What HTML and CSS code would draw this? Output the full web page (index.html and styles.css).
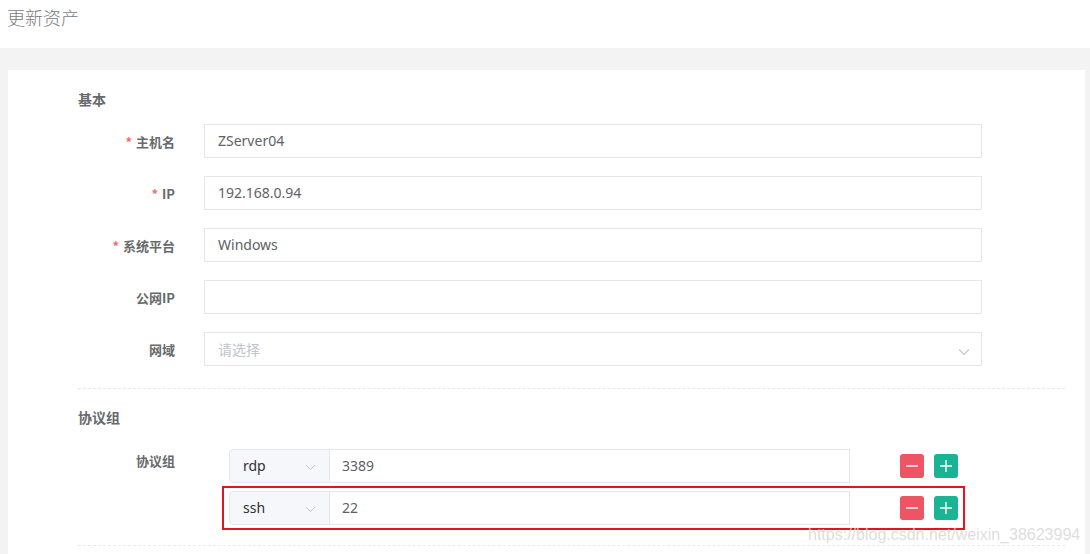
FILE: index.html
```html
<!DOCTYPE html>
<html lang="zh">
<head>
<meta charset="utf-8">
<title>更新资产</title>
<link rel="stylesheet" href="styles.css">
</head>
<body>
<header class="page-head">更新资产</header>
<main class="page-body">
  <section class="card">
    <h3 class="section-title">基本</h3>
    <div class="form-row">
      <label class="form-label"><span class="req">*</span>主机名</label>
      <div class="input">ZServer04</div>
    </div>
    <div class="form-row">
      <label class="form-label"><span class="req">*</span>IP</label>
      <div class="input">192.168.0.94</div>
    </div>
    <div class="form-row">
      <label class="form-label"><span class="req">*</span>系统平台</label>
      <div class="input">Windows</div>
    </div>
    <div class="form-row">
      <label class="form-label">公网IP</label>
      <div class="input"></div>
    </div>
    <div class="form-row">
      <label class="form-label">网域</label>
      <div class="input select">
        <span class="placeholder">请选择</span>
        <svg class="chev" width="12" height="8" viewBox="0 0 12 8"><path d="M1 1.5 L6 6.5 L11 1.5" fill="none" stroke="#c0c4cc" stroke-width="1.1"/></svg>
      </div>
    </div>
    <hr class="divider">
    <h3 class="section-title second">协议组</h3>
    <div class="proto-block">
      <label class="form-label proto-label">协议组</label>
      <div class="proto-list">
        <div class="proto-row">
          <div class="proto-group">
            <div class="proto-select">rdp
              <svg class="chev-sm" width="11" height="7" viewBox="0 0 11 7"><path d="M1 1 L5.5 5.5 L10 1" fill="none" stroke="#c0c4cc" stroke-width="1"/></svg>
            </div>
            <div class="proto-port">3389</div>
          </div>
          <div class="btns">
            <button class="btn minus"><svg width="12" height="12" viewBox="0 0 12 12"><path d="M0 6 H12" stroke="#fff" stroke-width="1.4"/></svg></button>
            <button class="btn plus"><svg width="12" height="12" viewBox="0 0 12 12"><path d="M0 6 H12 M6 0 V12" stroke="#fff" stroke-width="1.4"/></svg></button>
          </div>
        </div>
        <div class="proto-row marked">
          <div class="proto-group">
            <div class="proto-select">ssh
              <svg class="chev-sm" width="11" height="7" viewBox="0 0 11 7"><path d="M1 1 L5.5 5.5 L10 1" fill="none" stroke="#c0c4cc" stroke-width="1"/></svg>
            </div>
            <div class="proto-port">22</div>
          </div>
          <div class="btns">
            <button class="btn minus"><svg width="12" height="12" viewBox="0 0 12 12"><path d="M0 6 H12" stroke="#fff" stroke-width="1.4"/></svg></button>
            <button class="btn plus"><svg width="12" height="12" viewBox="0 0 12 12"><path d="M0 6 H12 M6 0 V12" stroke="#fff" stroke-width="1.4"/></svg></button>
          </div>
        </div>
      </div>
    </div>
    <hr class="divider last">
  </section>
</main>
<div class="watermark">https://blog.csdn.net/weixin_38623994</div>
</body>
</html>
```

FILE: styles.css
```css
* { box-sizing: border-box; }
html, body { margin: 0; padding: 0; }
body {
  width: 1090px;
  height: 554px;
  overflow: hidden;
  background: #f3f3f4;
  font-family: "Noto Sans", "Noto Sans CJK SC", sans-serif;
  color: #676a6c;
  position: relative;
}
.page-head {
  height: 48px;
  background: #fff;
  padding: 5px 0 0 7px;
  font-size: 18px;
  line-height: 24px;
  font-weight: 300;
  color: #777a7c;
  font-family: "Noto Sans CJK SC", sans-serif;
}
.page-body {
  padding: 22px 5px 0 8px;
}
.card {
  background: #fff;
  padding: 19px 20px 20px 70px;
  min-height: 484px;
}
.section-title {
  margin: 0;
  font-size: 14px;
  line-height: 20px;
  font-weight: bold;
  color: #676a6c;
  font-family: "Noto Sans CJK SC", sans-serif;
}
.section-title.second { margin-top: 18px; }
.form-row {
  display: flex;
  align-items: center;
  height: 34px;
  margin-top: 18px;
}
.section-title + .form-row { margin-top: 15px; }
.form-label {
  width: 126px;
  padding-right: 29px;
  text-align: right;
  font-size: 13px;
  font-weight: bold;
  color: #676a6c;
  font-family: "Noto Sans CJK SC", sans-serif;
  flex: none;
}
.req {
  color: #f56c6c;
  margin-right: 4px;
  font-weight: bold;
}
.input {
  width: 778px;
  height: 34px;
  border: 1px solid #e5e6e7;
  padding: 0 13px;
  font-size: 14px;
  line-height: 32px;
  color: #5e6266;
}
.select {
  display: flex;
  align-items: center;
  justify-content: space-between;
  padding-right: 11px;
}
.placeholder { color: #c0c4cc; font-family: "Noto Sans CJK SC", sans-serif; }
.chev { margin-top: 6px; }
.divider {
  border: 0;
  border-top: 1px dashed #e7eaec;
  margin: 22px 0 0 0;
  height: 0;
}
.divider.last { margin-top: 20px; }
.proto-block {
  display: flex;
  align-items: flex-start;
  margin-top: 22px;
}
.proto-label {
  line-height: 24px;
  padding-top: 0;
}
.proto-list {
  margin-left: 25px;
  display: flex;
  flex-direction: column;
  gap: 8px;
}
.proto-row {
  display: flex;
  align-items: center;
  height: 34px;
  position: relative;
}
.proto-row.marked::after {
  content: "";
  position: absolute;
  top: -5px;
  bottom: -5px;
  left: -7px;
  right: -7px;
  border: 2px solid #e3141f;
  pointer-events: none;
}
.proto-group {
  display: flex;
  width: 621px;
  height: 34px;
}
.proto-select {
  width: 101px;
  height: 34px;
  background: #f5f7fa;
  border: 1px solid #e4e7ed;
  border-radius: 4px 0 0 4px;
  padding: 0 13px;
  font-size: 14px;
  line-height: 32px;
  color: #303133;
  display: flex;
  align-items: center;
  justify-content: space-between;
}
.chev-sm { margin-top: 2px; }
.proto-port {
  flex: 1;
  height: 34px;
  border: 1px solid #e5e6e7;
  border-left: 0;
  padding: 0 12px;
  font-size: 14px;
  line-height: 32px;
  color: #5e6266;
}
.btns {
  display: flex;
  gap: 10px;
  margin-left: 50px;
}
.btn {
  width: 24px;
  height: 24px;
  border: 0;
  border-radius: 3px;
  padding: 0;
  display: flex;
  align-items: center;
  justify-content: center;
}
.btn.minus { background: #ed5565; }
.btn.plus { background: #1ab394; }
.watermark {
  position: absolute;
  left: 808px;
  top: 524px;
  font-family: "Liberation Sans", sans-serif;
  font-size: 16px;
  line-height: 22px;
  color: rgba(215, 215, 215, 0.85);
  white-space: nowrap;
}
```
